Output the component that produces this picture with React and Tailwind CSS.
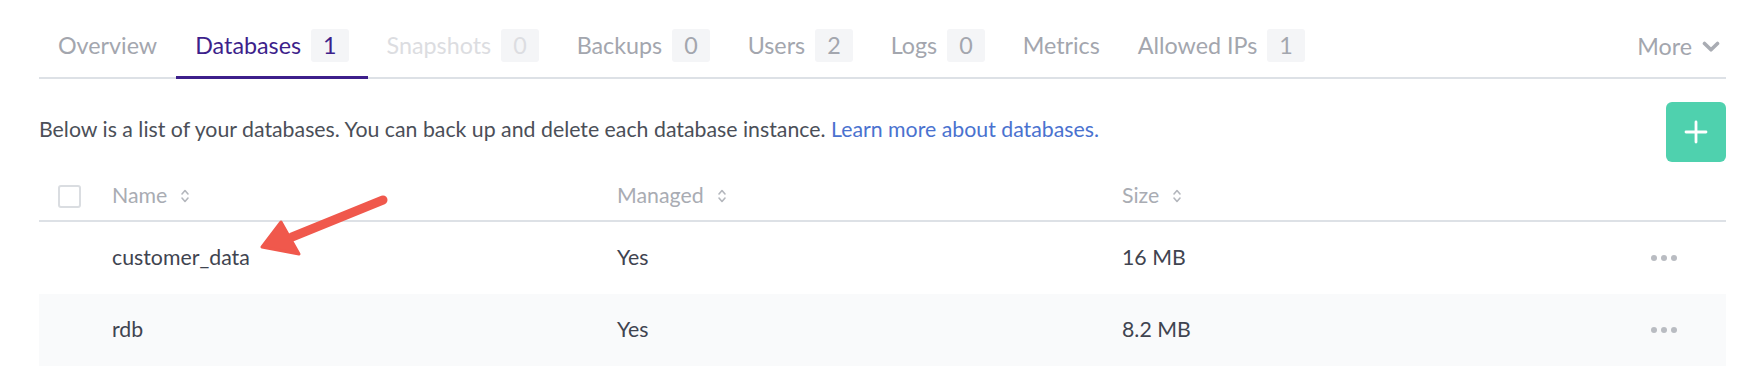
import React from 'react';

const tabs = [
  { label: 'Overview' },
  { label: 'Databases', count: 1, active: true },
  { label: 'Snapshots', count: 0, disabled: true },
  { label: 'Backups', count: 0 },
  { label: 'Users', count: 2 },
  { label: 'Logs', count: 0 },
  { label: 'Metrics' },
  { label: 'Allowed IPs', count: 1 },
];

const rows = [
  { name: 'customer_data', managed: 'Yes', size: '16 MB' },
  { name: 'rdb', managed: 'Yes', size: '8.2 MB' },
];

const SortIcon = () => (
  <svg className="w-[10px] h-[16px]" viewBox="0 0 10 16" fill="none" stroke="#b4b7bd" strokeWidth="1.6" strokeLinecap="round" strokeLinejoin="round">
    <path d="M2 6l3-3.5L8 6" />
    <path d="M2 10l3 3.5L8 10" />
  </svg>
);

const Dots = () => (
  <div className="flex items-center gap-[4px]">
    <span className="w-[6px] h-[6px] rounded-full bg-[#b9bcc2]" />
    <span className="w-[6px] h-[6px] rounded-full bg-[#b9bcc2]" />
    <span className="w-[6px] h-[6px] rounded-full bg-[#b9bcc2]" />
  </div>
);

const Tab = ({ tab }) => {
  let color = 'text-[#a3a6ae] border-transparent';
  if (tab.active) color = 'text-[#3d1f8b] border-[#3d1f8b]';
  if (tab.disabled) color = 'text-[#dcdde1] border-transparent';
  return (
    <div className={`-mb-[2px] h-[63px] pb-[2px] px-[19px] flex items-center gap-[10px] border-b-[3px] ${color}`}>
      <span>{tab.label}</span>
      {tab.count !== undefined && (
        <span className="h-[33px] px-[12px] flex items-center rounded-[3px] bg-[#f4f5f7]">{tab.count}</span>
      )}
    </div>
  );
};

export default function App() {
  return (
    <div
      className="relative w-full bg-white pt-[16px] pl-[39px] pr-[30px] h-[392px] text-[21.3px]"
      style={{ fontFamily: 'Lato, "Liberation Sans", sans-serif' }}
    >
      {/* tabs */}
      <div className="flex items-stretch border-b-2 border-[#dde1e6] text-[23.3px]">
        {tabs.map((t) => (
          <Tab key={t.label} tab={t} />
        ))}
        <div className="ml-auto -mb-[2px] h-[63px] pb-[2px] flex items-center gap-[10px] text-[#a3a6ae] pr-[6px]">
          <span>More</span>
          <svg className="w-[18px] h-[12px]" viewBox="0 0 18 12" fill="none" stroke="#a9acb3" strokeWidth="3.6" strokeLinecap="round" strokeLinejoin="round">
            <path d="M2.5 2.5L9 8.8l6.5-6.3" />
          </svg>
        </div>
      </div>

      {/* description */}
      <div className="mt-[23px] flex items-center justify-between">
        <p className="text-[#4b4f58] pb-[4px]">
          Below is a list of your databases. You can back up and delete each database instance.{' '}
          <a className="text-[#4a72cf]">Learn more about databases.</a>
        </p>
        <button className="w-[60px] h-[60px] rounded-[6px] bg-[#4fd1ae] flex items-center justify-center">
          <svg className="w-[24px] h-[24px]" viewBox="0 0 24 24" fill="none" stroke="white" strokeWidth="2.8" strokeLinecap="round">
            <path d="M12 2v20M2 12h20" />
          </svg>
        </button>
      </div>

      {/* table */}
      <div className="mt-[10px]">
        <div className="grid grid-cols-[73px_505px_505px_1fr_80px] items-center h-[50px] border-b-2 border-[#dde1e6] text-[#a9acb3]">
          <div className="pl-[19px]">
            <div className="w-[23px] h-[23px] rounded-[3px] border-2 border-[#dadde1]" />
          </div>
          <div className="flex items-center gap-[13px]">
            <span>Name</span>
            <SortIcon />
          </div>
          <div className="flex items-center gap-[13px]">
            <span>Managed</span>
            <SortIcon />
          </div>
          <div className="flex items-center gap-[13px]">
            <span>Size</span>
            <SortIcon />
          </div>
          <div />
        </div>
        {rows.map((r, i) => (
          <div
            key={r.name}
            className={`grid grid-cols-[73px_505px_505px_1fr_80px] items-center h-[72px] text-[#3f4450] ${i % 2 === 1 ? 'bg-[#f9fafb]' : ''}`}
          >
            <div />
            <div>{r.name}</div>
            <div>{r.managed}</div>
            <div>{r.size}</div>
            <div className="flex justify-start pl-[5px]">
              <Dots />
            </div>
          </div>
        ))}
      </div>

      {/* annotation arrow */}
      <svg className="absolute left-0 top-0 w-[1756px] h-[392px] pointer-events-none" viewBox="0 0 1756 392">
        <line x1="383" y1="200" x2="292" y2="237" stroke="#f0584c" strokeWidth="9" strokeLinecap="round" />
        <polygon points="262,247 281,222 299,254" fill="#f0584c" stroke="#f0584c" strokeWidth="3" strokeLinejoin="round" />
      </svg>
    </div>
  );
}
